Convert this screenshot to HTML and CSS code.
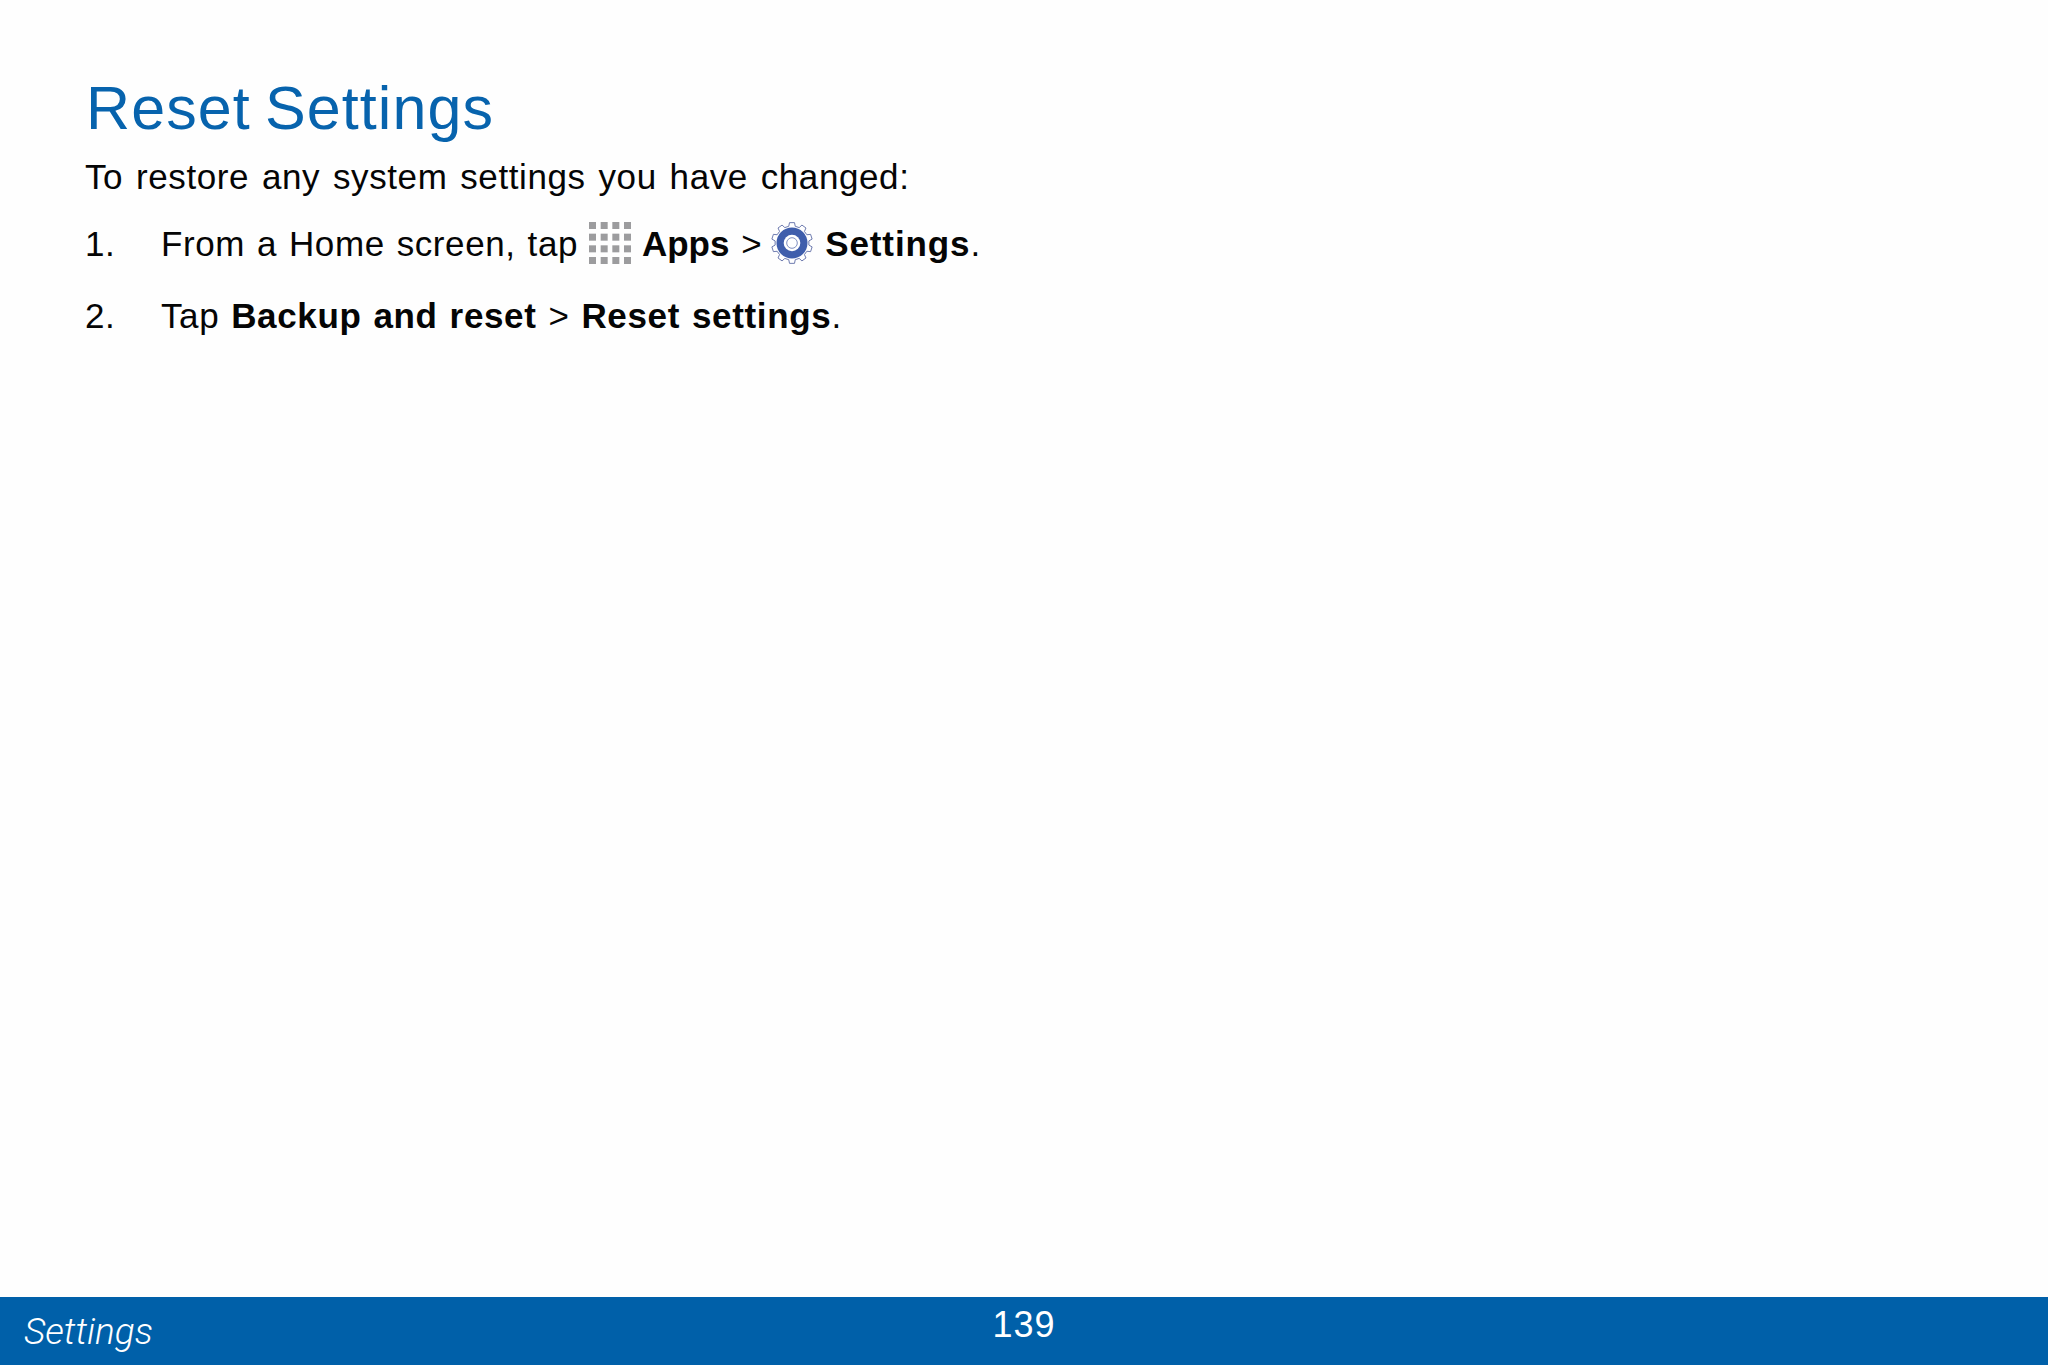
FILE: index.html
```html
<!DOCTYPE html>
<html lang="en">
<head>
<meta charset="utf-8">
<title>Reset Settings</title>
<link rel="stylesheet" href="styles.css">
</head>
<body>
<main class="content">
  <h1 class="title">Reset Settings</h1>
  <p class="intro">To restore any system settings you have changed:</p>
  <ol class="steps">
    <li class="step step-first">
      <span class="num">1.</span>
      <span class="step-text">From a Home screen, tap
        <svg class="icon icon-apps" viewBox="0 0 42 42" aria-hidden="true">
          <g fill="#9c9c9e">
            <rect x="0" y="0" width="7" height="7"/><rect x="11.67" y="0" width="7" height="7"/><rect x="23.33" y="0" width="7" height="7"/><rect x="35" y="0" width="7" height="7"/>
            <rect x="0" y="11.67" width="7" height="7"/><rect x="11.67" y="11.67" width="7" height="7"/><rect x="23.33" y="11.67" width="7" height="7"/><rect x="35" y="11.67" width="7" height="7"/>
            <rect x="0" y="23.33" width="7" height="7"/><rect x="11.67" y="23.33" width="7" height="7"/><rect x="23.33" y="23.33" width="7" height="7"/><rect x="35" y="23.33" width="7" height="7"/>
            <rect x="0" y="35" width="7" height="7"/><rect x="11.67" y="35" width="7" height="7"/><rect x="23.33" y="35" width="7" height="7"/><rect x="35" y="35" width="7" height="7"/>
          </g>
        </svg>
        <b class="tight">Apps</b> &gt;
        <svg class="icon icon-gear" viewBox="0 0 42 42" aria-hidden="true">
          <path fill="#fff" stroke="#5d6ca6" stroke-width="0.9" stroke-linejoin="round" d="M17.76 4.31L18.5 .65H23.5L24.24 4.31L28.18 5.59L30.94 3.07L34.98 6.01L33.43 9.41L35.87 12.76L39.58 12.34L41.12 17.09L37.87 18.93V23.07L41.12 24.91L39.58 29.66L35.87 29.24L33.43 32.59L34.98 35.99L30.94 38.93L28.18 36.41L24.24 37.69L23.5 41.35H18.5L17.76 37.69L13.82 36.41L11.06 38.93L7.02 35.99L8.57 32.59L6.13 29.24L2.42 29.66L.88 24.91L4.13 23.07V18.93L.88 17.09L2.42 12.34L6.13 12.76L8.57 9.41L7.02 6.01L11.06 3.07L13.82 5.59Z"/>
          <circle cx="21" cy="21" r="15.5" fill="#3f5eac"/>
          <circle cx="21" cy="21" r="8.3" fill="#fff"/>
          <circle cx="21" cy="21" r="5.3" fill="#fff" stroke="#7f8fc0" stroke-width="1"/>
        </svg>
        <b class="wide">Settings</b>.</span>
    </li>
    <li class="step">
      <span class="num">2.</span>
      <span class="step-text">Tap <b>Backup and reset</b> &gt; <b>Reset settings</b>.</span>
    </li>
  </ol>
</main>
<footer class="footer">
  <span class="footer-section">Settings</span>
  <span class="footer-page">139</span>
</footer>
</body>
</html>
```
FILE: styles.css
```css
* { box-sizing: border-box; }
html, body { margin: 0; height: 100%; }
body {
  width: 2048px;
  height: 1365px;
  display: flex;
  flex-direction: column;
  background: #fefefe;
  color: #050505;
  font-family: "Liberation Sans", Arial, sans-serif;
  overflow: hidden;
}
.content { flex: 1; padding: 71px 0 0 85px; }
.title {
  margin: 0 0 0 1px;
  font-size: 61px;
  line-height: 74px;
  font-weight: 400;
  letter-spacing: 1.1px;
  word-spacing: -4px;
  color: #0763ad;
}
.intro {
  margin: 12px 0 0;
  font-size: 35px;
  line-height: 40px;
  letter-spacing: 0.6px;
  word-spacing: 2.5px;
}
.steps { list-style: none; margin: 27px 0 0; padding: 0; }
.step {
  display: flex;
  font-size: 35px;
  line-height: 40px;
  letter-spacing: 0.6px;
  word-spacing: 1.6px;
  margin-top: 32px;
}
.step-first { margin-top: 0; }
.step b { letter-spacing: 0.65px; }
.step .tight { letter-spacing: 0; }
.step .wide { letter-spacing: 0.9px; }
.num { width: 76px; flex: none; }
.icon { display: inline-block; vertical-align: middle; }
.icon-apps { width: 42px; height: 42px; margin: -7px -1px 0 -1px; }
.icon-gear { width: 42px; height: 42px; margin: -7px 0 0 -3px; }
.footer {
  position: relative;
  flex: none;
  height: 68px;
  background: #0060a9;
  color: #fff;
}
.footer-section {
  display: block;
  padding: 15px 0 0 24px;
  font-family: Roboto, "Liberation Sans", sans-serif;
  font-weight: 300;
  font-size: 37px;
  line-height: 40px;
  font-style: italic;
}
.footer-page {
  position: absolute;
  left: 0;
  right: 0;
  top: 8px;
  text-align: center;
  font-size: 36px;
  line-height: 40px;
  letter-spacing: 1px;
}
```
